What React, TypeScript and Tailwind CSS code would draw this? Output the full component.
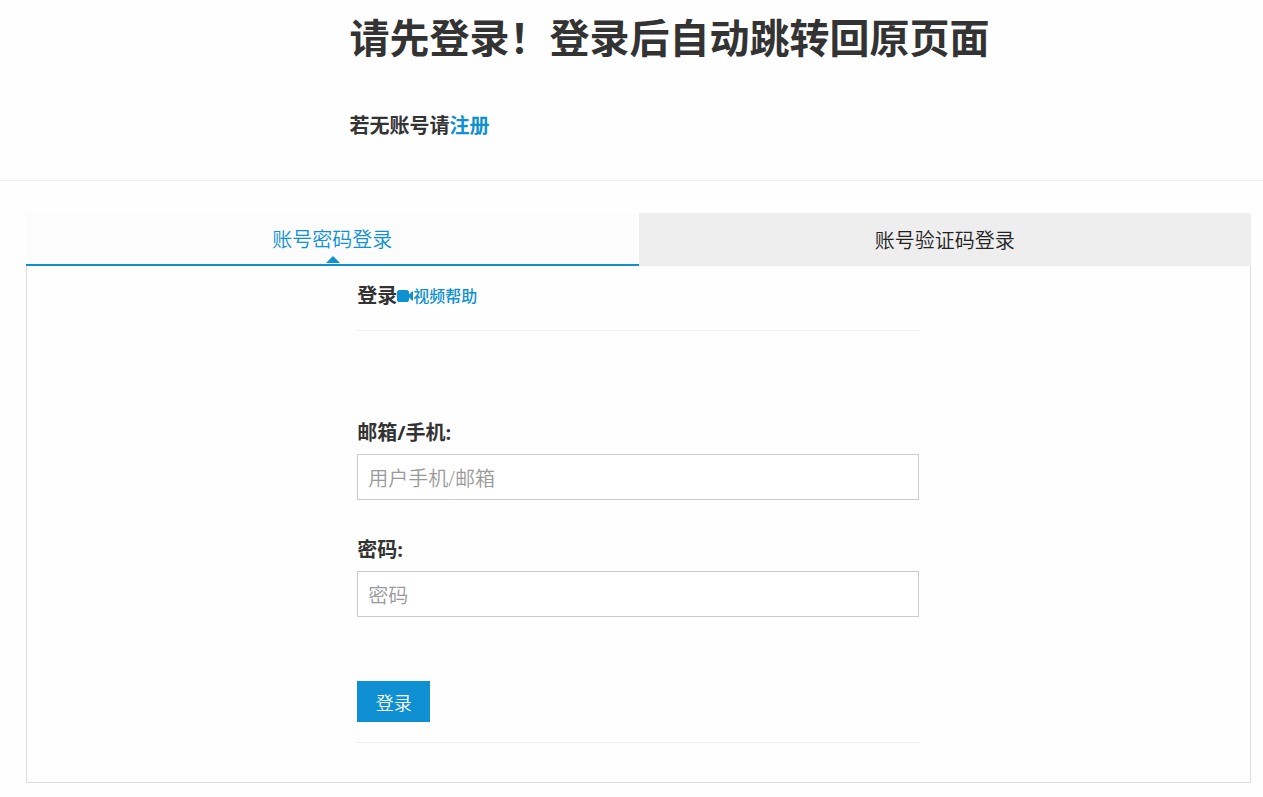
import { useState } from "react";

const tabs = ["账号密码登录", "账号验证码登录"];

export default function App() {
  const [active, setActive] = useState(0);
  return (
    <div className="min-h-screen bg-[#fefefe] font-['Open_Sans','Noto_Sans_CJK_SC',sans-serif] text-xl text-[#333]">
      <header className="border-b border-[#eee] pb-10">
        <div className="mx-auto w-[564px]">
          <h1 className="whitespace-nowrap pt-2 text-[40px] leading-[60px] font-bold">请先登录！登录后自动跳转回原页面</h1>
          <h2 className="pt-11 text-xl leading-7 font-bold">
            若无账号请<a href="#register" className="text-[#0e90d2]">注册</a>
          </h2>
        </div>
      </header>

      <main className="mt-8 mr-3 ml-[26px]">
        <div role="tablist" className="flex">
          {tabs.map((name, i) => (
            <button
              key={name}
              type="button"
              role="tab"
              aria-selected={active === i}
              onClick={() => setActive(i)}
              className={
                active === i
                  ? "relative h-[53px] flex-1 border-b-2 border-[#0e90d2] bg-[#fcfcfc] pt-0.5 font-[350] text-[#0e90d2]"
                  : "relative h-[53px] flex-1 bg-[#eee] pt-0.5 font-[350] text-[#222]"
              }
            >
              {name}
              {active === i && (
                <span className="absolute bottom-px left-1/2 -ml-1.5 border-x-7 border-b-7 border-x-transparent border-b-[#0e90d2]" />
              )}
            </button>
          ))}
        </div>

        <section className="border border-t-0 border-[#ddd] pb-[39px]">
          <form className="ml-[27%] w-[562px]" onSubmit={(e) => e.preventDefault()}>
            <h3 className="flex items-center pt-4 text-xl leading-7 font-bold">
              登录
              <a href="#help" className="flex items-center text-base font-medium text-[#0e90d2]">
                <svg viewBox="0 0 16 12" className="h-3 w-4" fill="currentColor" aria-hidden="true">
                  <path d="M2.6 0h6.8A2.6 2.6 0 0 1 12 2.600v1.900l3-3c.4-.4 1-.1 1 .4v8.200c0 .5-.6.8-1 .4l-3-3v1.900A2.600 2.600 0 0 1 9.400 12H2.600A2.600 2.600 0 0 1 0 9.400V2.600A2.600 2.600 0 0 1 2.600 0z" />
                </svg>
                视频帮助
              </a>
            </h3>
            <hr className="mt-5 border-[#eee]" />

            <label htmlFor="account" className="mt-[88px] block leading-7 font-bold">邮箱/手机:</label>
            <input
              id="account"
              type="text"
              placeholder="用户手机/邮箱"
              className="mt-[7px] block h-[46px] w-full border border-[#ccc] bg-white px-2.5 pt-0.5 font-[350] placeholder:text-[#999]"
            />

            <label htmlFor="password" className="mt-9 block leading-7 font-bold">密码:</label>
            <input
              id="password"
              type="password"
              placeholder="密码"
              className="mt-[7px] block h-[46px] w-full border border-[#ccc] bg-white px-2.5 pt-0.5 font-[350] placeholder:text-[#999]"
            />

            <button type="submit" className="mt-16 block h-[41px] w-[73px] bg-[#0e90d2] pt-0.5 text-lg font-[350] text-white">登录</button>
            <hr className="mt-5 border-[#eee]" />
          </form>
        </section>
      </main>
    </div>
  );
}
